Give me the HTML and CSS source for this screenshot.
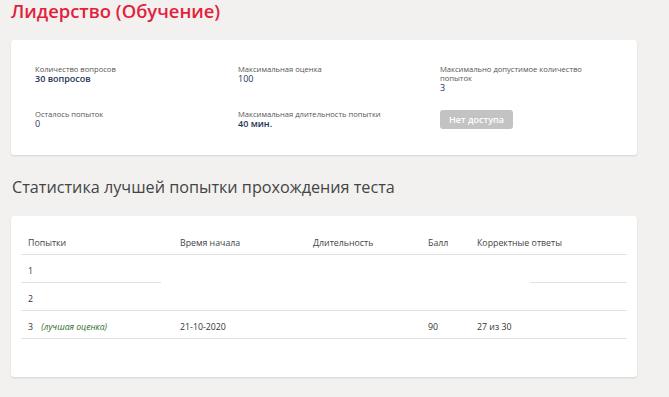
FILE: index.html
```html
<!DOCTYPE html>
<html lang="ru">
<head>
<meta charset="utf-8">
<title>Лидерство (Обучение)</title>
<link rel="stylesheet" href="styles.css">
</head>
<body>
<div class="page">
  <h1 class="title">Лидерство (Обучение)</h1>

  <section class="card info-card">
    <div class="info-grid">
      <div class="field">
        <div class="label">Количество вопросов</div>
        <div class="value strong">30 вопросов</div>
      </div>
      <div class="field">
        <div class="label">Максимальная оценка</div>
        <div class="value">100</div>
      </div>
      <div class="field">
        <div class="label">Максимально допустимое количество попыток</div>
        <div class="value">3</div>
      </div>
      <div class="field">
        <div class="label">Осталось попыток</div>
        <div class="value">0</div>
      </div>
      <div class="field">
        <div class="label">Максимальная длительность попытки</div>
        <div class="value strong">40 мин.</div>
      </div>
      <div class="field">
        <button class="btn-disabled" type="button" disabled>Нет доступа</button>
      </div>
    </div>
  </section>

  <h2 class="subtitle">Статистика лучшей попытки прохождения теста</h2>

  <section class="card stats-card">
    <div class="stats">
      <div class="row head">
        <div class="cell">Попытки</div>
        <div class="cell">Время начала</div>
        <div class="cell">Длительность</div>
        <div class="cell">Балл</div>
        <div class="cell">Корректные ответы</div>
      </div>
      <div class="row no-border">
        <div class="cell">1</div>
      </div>
      <div class="partial-line">
        <span class="seg seg-left"></span>
        <span class="seg seg-right"></span>
      </div>
      <div class="row">
        <div class="cell">2</div>
      </div>
      <div class="row">
        <div class="cell">3 <em class="best">(лучшая оценка)</em></div>
        <div class="cell">21-10-2020</div>
        <div class="cell"></div>
        <div class="cell">90</div>
        <div class="cell">27 из 30</div>
      </div>
    </div>
  </section>
</div>
</body>
</html>
```

FILE: styles.css
```css
* { box-sizing: border-box; }

html, body {
  margin: 0;
  padding: 0;
  background: #f2f1ef;
}

body {
  font-family: "Open Sans", "Liberation Sans", sans-serif;
  color: #333;
}

.page {
  width: 669px;
  height: 397px;
  overflow: hidden;
  padding: 0 32px 0 11px;
}

.title {
  margin: 0;
  height: 40px;
  padding-top: 1px;
  line-height: 20px;
  font-size: 18.4px;
  font-weight: 600;
  color: #e2223c;
}

.card {
  background: #fff;
  border-radius: 3px;
  box-shadow: 0 1px 2px rgba(0, 0, 0, 0.12);
  width: 626px;
}

.info-card {
  height: 115px;
  padding: 25px 24px 0 24px;
}

.info-grid {
  display: grid;
  grid-template-columns: 203px 202px 160px;
  grid-template-rows: 28px 20px;
  row-gap: 17px;
}

.label {
  font-size: 7.6px;
  line-height: 9px;
  color: #555;
}

.value {
  font-size: 9px;
  line-height: 10px;
  color: #1d3557;
}

.value.strong {
  font-weight: 600;
}

.btn-disabled {
  display: block;
  width: 73px;
  height: 19px;
  padding: 0;
  border: 0;
  border-radius: 3px;
  background: #c3c3c3;
  color: #fff;
  font-family: "Open Sans", "Liberation Sans", sans-serif;
  font-size: 9px;
  font-weight: 600;
  line-height: 19px;
  text-align: center;
  cursor: default;
}

.subtitle {
  margin: 0;
  height: 61px;
  padding-top: 21px;
  font-size: 16.2px;
  font-weight: 400;
  line-height: 22px;
  color: #444;
  padding-left: 1px;
}

.stats-card {
  height: 161px;
  padding: 11px 10px 0 10px;
}

.stats {
  width: 606px;
}

.row {
  display: grid;
  grid-template-columns: 152px 133px 115px 49px 157px;
  height: 28px;
  align-items: center;
  border-bottom: 1px solid #e2e2e2;
  font-size: 8.8px;
  color: #333;
}

.row.no-border {
  border-bottom: 0;
  height: 27px;
}

.row.head {
  color: #444;
}

.cell {
  padding-left: 7px;
  white-space: nowrap;
  padding-top: 4px;
}

.best {
  font-size: 8.6px;
  color: #2a6b2a;
  margin-left: 6px;
}

.partial-line {
  display: flex;
  justify-content: space-between;
  height: 1px;
}

.seg {
  display: block;
  height: 1px;
  background: #e2e2e2;
}

.seg-left { width: 140px; }
.seg-right { width: 97px; }
```
